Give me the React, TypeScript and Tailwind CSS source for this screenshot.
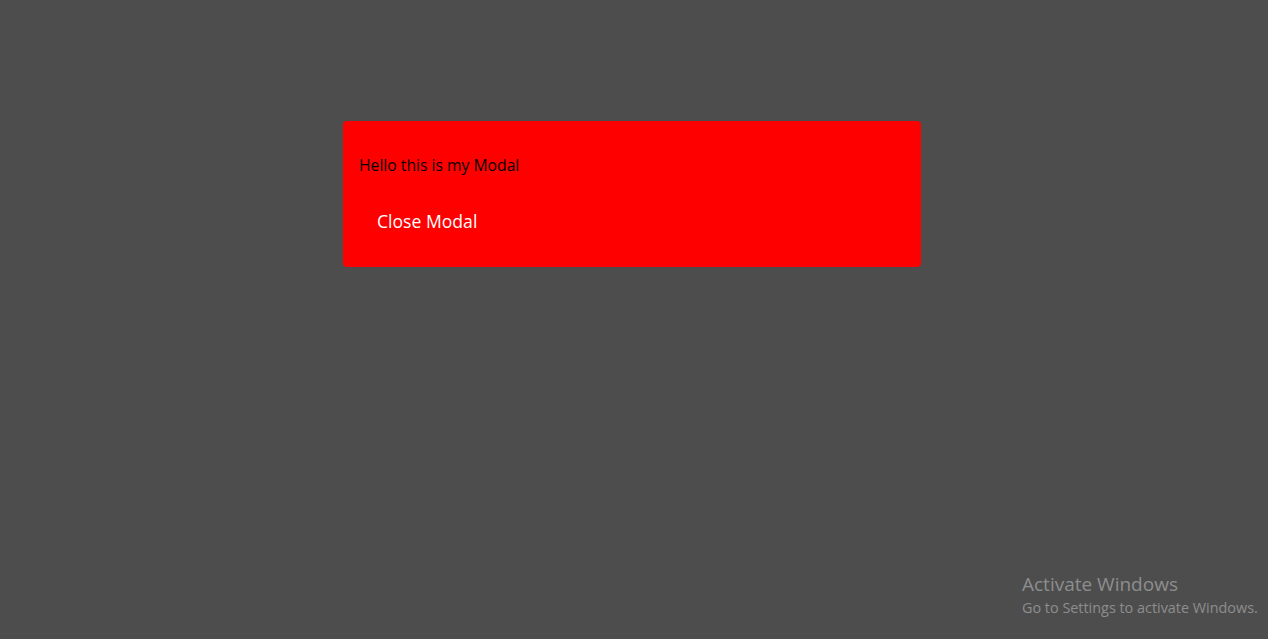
export default function App() {
  return (
    <div className="relative h-[639px] w-full overflow-hidden bg-[#4d4d4d] font-['Open_Sans',sans-serif]">
      <div className="ml-[343px] mt-[121px] flex h-[146px] w-[578px] flex-col rounded bg-[#ff0000] px-4 pt-[32px]">
        <p className="text-[15.7px] leading-6 text-black">Hello this is my Modal</p>
        <div className="mt-[24px]">
          <button className="ml-[2px] px-4 py-2 text-[17.6px] leading-6 text-white">Close Modal</button>
        </div>
      </div>
      <div className="absolute bottom-[21px] left-[1022px] text-[#8d8d8d]">
        <div className="text-[19px] leading-6">Activate Windows</div>
        <div className="mt-[2px] text-[14.4px] leading-5">Go to Settings to activate Windows.</div>
      </div>
    </div>
  );
}
